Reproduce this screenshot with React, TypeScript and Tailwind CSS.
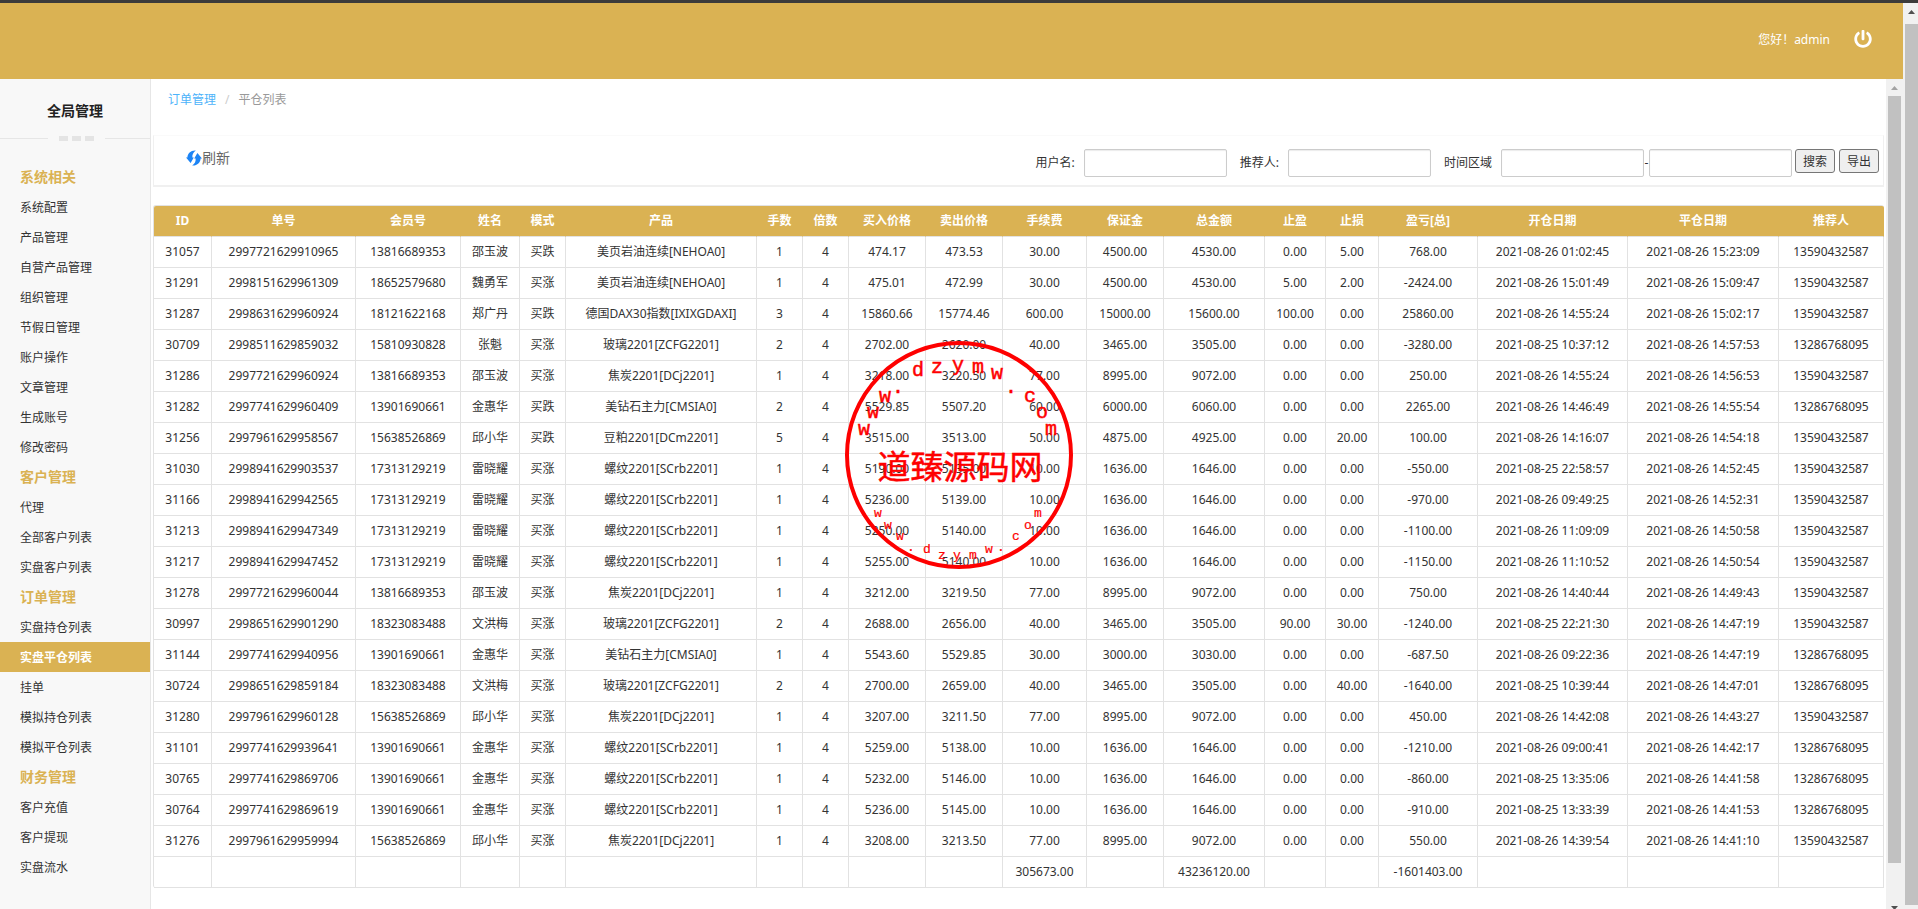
import React, { useState } from 'react';
import { FaPowerOff } from 'react-icons/fa';

const menu = [
  { title: '系统相关', items: ['系统配置', '产品管理', '自营产品管理', '组织管理', '节假日管理', '账户操作', '文章管理', '生成账号', '修改密码'] },
  { title: '客户管理', items: ['代理', '全部客户列表', '实盘客户列表'] },
  { title: '订单管理', items: ['实盘持仓列表', '实盘平仓列表', '挂单', '模拟持仓列表', '模拟平仓列表'] },
  { title: '财务管理', items: ['客户充值', '客户提现', '实盘流水'] },
];

const columns = [
  { label: 'ID', width: 'w-[58px]' },
  { label: '单号', width: 'w-[144px]' },
  { label: '会员号', width: 'w-[105px]' },
  { label: '姓名', width: 'w-[59px]' },
  { label: '模式', width: 'w-[46px]' },
  { label: '产品', width: 'w-[191px]' },
  { label: '手数', width: 'w-[46px]' },
  { label: '倍数', width: 'w-[46px]' },
  { label: '买入价格', width: 'w-[77px]' },
  { label: '卖出价格', width: 'w-[77px]' },
  { label: '手续费', width: 'w-[84px]' },
  { label: '保证金', width: 'w-[77px]' },
  { label: '总金额', width: 'w-[101px]' },
  { label: '止盈', width: 'w-[61px]' },
  { label: '止损', width: 'w-[53px]' },
  { label: '盈亏[总]', width: 'w-[99px]' },
  { label: '开仓日期', width: 'w-[150px]' },
  { label: '平仓日期', width: 'w-[151px]' },
  { label: '推荐人', width: 'w-[105px]' },
];

const rows = [
  ['31057', '2997721629910965', '13816689353', '邵玉波', '买跌', '美页岩油连续[NEHOA0]', '1', '4', '474.17', '473.53', '30.00', '4500.00', '4530.00', '0.00', '5.00', '768.00', '2021-08-26 01:02:45', '2021-08-26 15:23:09', '13590432587'],
  ['31291', '2998151629961309', '18652579680', '魏勇军', '买涨', '美页岩油连续[NEHOA0]', '1', '4', '475.01', '472.99', '30.00', '4500.00', '4530.00', '5.00', '2.00', '-2424.00', '2021-08-26 15:01:49', '2021-08-26 15:09:47', '13590432587'],
  ['31287', '2998631629960924', '18121622168', '郑广丹', '买跌', '德国DAX30指数[IXIXGDAXI]', '3', '4', '15860.66', '15774.46', '600.00', '15000.00', '15600.00', '100.00', '0.00', '25860.00', '2021-08-26 14:55:24', '2021-08-26 15:02:17', '13590432587'],
  ['30709', '2998511629859032', '15810930828', '张魁', '买涨', '玻璃2201[ZCFG2201]', '2', '4', '2702.00', '2620.00', '40.00', '3465.00', '3505.00', '0.00', '0.00', '-3280.00', '2021-08-25 10:37:12', '2021-08-26 14:57:53', '13286768095'],
  ['31286', '2997721629960924', '13816689353', '邵玉波', '买涨', '焦炭2201[DCj2201]', '1', '4', '3218.00', '3220.50', '77.00', '8995.00', '9072.00', '0.00', '0.00', '250.00', '2021-08-26 14:55:24', '2021-08-26 14:56:53', '13590432587'],
  ['31282', '2997741629960409', '13901690661', '金惠华', '买跌', '美钻石主力[CMSIA0]', '2', '4', '5529.85', '5507.20', '60.00', '6000.00', '6060.00', '0.00', '0.00', '2265.00', '2021-08-26 14:46:49', '2021-08-26 14:55:54', '13286768095'],
  ['31256', '2997961629958567', '15638526869', '邱小华', '买跌', '豆粕2201[DCm2201]', '5', '4', '3515.00', '3513.00', '50.00', '4875.00', '4925.00', '0.00', '20.00', '100.00', '2021-08-26 14:16:07', '2021-08-26 14:54:18', '13590432587'],
  ['31030', '2998941629903537', '17313129219', '雷晓耀', '买涨', '螺纹2201[SCrb2201]', '1', '4', '5190.00', '5135.00', '10.00', '1636.00', '1646.00', '0.00', '0.00', '-550.00', '2021-08-25 22:58:57', '2021-08-26 14:52:45', '13590432587'],
  ['31166', '2998941629942565', '17313129219', '雷晓耀', '买涨', '螺纹2201[SCrb2201]', '1', '4', '5236.00', '5139.00', '10.00', '1636.00', '1646.00', '0.00', '0.00', '-970.00', '2021-08-26 09:49:25', '2021-08-26 14:52:31', '13590432587'],
  ['31213', '2998941629947349', '17313129219', '雷晓耀', '买涨', '螺纹2201[SCrb2201]', '1', '4', '5250.00', '5140.00', '10.00', '1636.00', '1646.00', '0.00', '0.00', '-1100.00', '2021-08-26 11:09:09', '2021-08-26 14:50:58', '13590432587'],
  ['31217', '2998941629947452', '17313129219', '雷晓耀', '买涨', '螺纹2201[SCrb2201]', '1', '4', '5255.00', '5140.00', '10.00', '1636.00', '1646.00', '0.00', '0.00', '-1150.00', '2021-08-26 11:10:52', '2021-08-26 14:50:54', '13590432587'],
  ['31278', '2997721629960044', '13816689353', '邵玉波', '买涨', '焦炭2201[DCj2201]', '1', '4', '3212.00', '3219.50', '77.00', '8995.00', '9072.00', '0.00', '0.00', '750.00', '2021-08-26 14:40:44', '2021-08-26 14:49:43', '13590432587'],
  ['30997', '2998651629901290', '18323083488', '文洪梅', '买涨', '玻璃2201[ZCFG2201]', '2', '4', '2688.00', '2656.00', '40.00', '3465.00', '3505.00', '90.00', '30.00', '-1240.00', '2021-08-25 22:21:30', '2021-08-26 14:47:19', '13590432587'],
  ['31144', '2997741629940956', '13901690661', '金惠华', '买涨', '美钻石主力[CMSIA0]', '1', '4', '5543.60', '5529.85', '30.00', '3000.00', '3030.00', '0.00', '0.00', '-687.50', '2021-08-26 09:22:36', '2021-08-26 14:47:19', '13286768095'],
  ['30724', '2998651629859184', '18323083488', '文洪梅', '买涨', '玻璃2201[ZCFG2201]', '2', '4', '2700.00', '2659.00', '40.00', '3465.00', '3505.00', '0.00', '40.00', '-1640.00', '2021-08-25 10:39:44', '2021-08-26 14:47:01', '13286768095'],
  ['31280', '2997961629960128', '15638526869', '邱小华', '买涨', '焦炭2201[DCj2201]', '1', '4', '3207.00', '3211.50', '77.00', '8995.00', '9072.00', '0.00', '0.00', '450.00', '2021-08-26 14:42:08', '2021-08-26 14:43:27', '13590432587'],
  ['31101', '2997741629939641', '13901690661', '金惠华', '买涨', '螺纹2201[SCrb2201]', '1', '4', '5259.00', '5138.00', '10.00', '1636.00', '1646.00', '0.00', '0.00', '-1210.00', '2021-08-26 09:00:41', '2021-08-26 14:42:17', '13286768095'],
  ['30765', '2997741629869706', '13901690661', '金惠华', '买涨', '螺纹2201[SCrb2201]', '1', '4', '5232.00', '5146.00', '10.00', '1636.00', '1646.00', '0.00', '0.00', '-860.00', '2021-08-25 13:35:06', '2021-08-26 14:41:58', '13286768095'],
  ['30764', '2997741629869619', '13901690661', '金惠华', '买涨', '螺纹2201[SCrb2201]', '1', '4', '5236.00', '5145.00', '10.00', '1636.00', '1646.00', '0.00', '0.00', '-910.00', '2021-08-25 13:33:39', '2021-08-26 14:41:53', '13286768095'],
  ['31276', '2997961629959994', '15638526869', '邱小华', '买涨', '焦炭2201[DCj2201]', '1', '4', '3208.00', '3213.50', '77.00', '8995.00', '9072.00', '0.00', '0.00', '550.00', '2021-08-26 14:39:54', '2021-08-26 14:41:10', '13590432587'],
  ['', '', '', '', '', '', '', '', '', '', '305673.00', '', '43236120.00', '', '', '-1601403.00', '', '', ''],
];

const inputClass =
  'h-7 w-[143px] rounded-[2px] border border-[#ccc] bg-white px-1 shadow-[inset_0_1px_1px_rgba(0,0,0,0.08)] outline-none';

// letters on the upper and lower arc of the stamp: [char, x, baseline]
const upperArc: [string, number, number][] = [
  ['w', 20, 95], ['w', 29, 78], ['w', 41, 62], ['.', 54, 53], ['d', 74, 36], ['z', 93, 33], ['y', 114, 31],
  ['m', 134, 33], ['w', 153, 39], ['.', 167, 53], ['c', 186, 62], ['o', 198, 78], ['m', 207, 95],
];
const lowerArc: [string, number, number][] = [
  ['w', 34, 177], ['w', 44, 189], ['w', 56, 200], ['.', 67, 211], ['d', 83, 213], ['z', 98, 219], ['y', 113, 219],
  ['m', 129, 219], ['w', 145, 213], ['.', 157, 211], ['c', 172, 200], ['o', 184, 189], ['m', 194, 177],
];

const Stamp: React.FC = () => (
  <svg
    viewBox="0 0 230 230"
    className="pointer-events-none absolute top-1/2 left-1/2 z-20 h-[230px] w-[230px] -translate-x-1/2 -translate-y-1/2"
    fill="#fe0000"
    textAnchor="middle"
  >
    <circle cx="115" cy="115" r="112" fill="none" stroke="#fe0000" strokeWidth="4" />
    <g className="font-['Liberation_Mono',monospace] text-[20px]" stroke="#fe0000" strokeWidth="0.5">
      {upperArc.map(([char, x, y]) => (
        <text key={x} x={x} y={y}>{char}</text>
      ))}
    </g>
    <text x="116" y="139" className="font-['Noto_Sans_CJK_SC',sans-serif] text-[33px]" stroke="#fe0000" strokeWidth="0.5">
      道臻源码网
    </text>
    <g className="font-['Liberation_Mono',monospace] text-[13px]" stroke="#fe0000" strokeWidth="0.2">
      {lowerArc.map(([char, x, y]) => (
        <text key={x} x={x} y={y}>{char}</text>
      ))}
    </g>
  </svg>
);

const RefreshIcon: React.FC = () => (
  <svg viewBox="0 0 16 16" className="h-4 w-4" fill="#1c84f5">
    <path d="M9.8 0.6C5 0.2 1.6 3.4 1.4 7.6H0L4.6 13L7.8 7.6H6.4C6 4.8 7.2 2.4 9.8 0.6Z" />
    <path d="M6.2 15.4C11 15.8 14.4 12.6 14.6 8.4H16L11.4 3L8.2 8.4H9.6C10 11.2 8.8 13.6 6.2 15.4Z" />
  </svg>
);

const Sidebar: React.FC = () => {
  const [active, setActive] = useState('实盘平仓列表');

  return (
    <aside className="w-[151px] shrink-0 border-r border-[#e6e6e6] bg-[#f8f8f8]">
      <h2 className="pt-5 text-center text-sm leading-6 font-bold text-[#222]">全局管理</h2>
      <div className="mt-3 flex h-[6px] items-center justify-between">
        <span className="h-px w-12 bg-[#e6e6e6]" />
        <div className="flex gap-1">
          <span className="h-[5px] w-[9px] bg-[#e4e4e4]" />
          <span className="h-[5px] w-[9px] bg-[#e4e4e4]" />
          <span className="h-[5px] w-[9px] bg-[#e4e4e4]" />
        </div>
        <span className="h-px w-[45px] bg-[#e6e6e6]" />
      </div>
      <nav className="mt-[21px]">
        {menu.map((group) => (
          <div key={group.title}>
            <h3 className="h-[30px] pl-5 text-sm leading-[30px] font-bold text-[#dab253]">{group.title}</h3>
            {group.items.map((item) => (
              <a
                key={item}
                href="#"
                onClick={() => setActive(item)}
                className={
                  item === active
                    ? 'block h-[30px] bg-[#dab253] pl-5 leading-8 font-bold text-white'
                    : 'block h-[30px] pl-5 leading-8 hover:text-[#dab253]'
                }
              >
                {item}
              </a>
            ))}
          </div>
        ))}
      </nav>
    </aside>
  );
};

const SearchBar: React.FC = () => (
  <div className="mt-[25px] flex h-[52px] items-start justify-between border border-b-2 border-[#f0f0f0] border-t-[#fafafa]">
    <button type="button" className="mt-[10px] ml-8 flex items-center text-sm leading-6 text-[#666]">
      <RefreshIcon />
      刷新
    </button>
    <form className="mt-[13px] mr-1 flex items-start leading-7" onSubmit={(e) => e.preventDefault()}>
      <label htmlFor="username" className="mr-[9px]">用户名:</label>
      <input id="username" type="text" className={inputClass} />
      <label htmlFor="referrer" className="mr-[9px] ml-[13px]">推荐人:</label>
      <input id="referrer" type="text" className={inputClass} />
      <label htmlFor="start" className="mr-[9px] ml-[13px]">时间区域</label>
      <input id="start" type="text" className={inputClass} />
      <label htmlFor="end" className="w-[5px] text-center">-</label>
      <input id="end" type="text" className={inputClass} />
      <button type="submit" className="ml-[3px] h-6 w-10 rounded-[3px] border border-[#767676] bg-[#efefef] leading-6">
        搜索
      </button>
      <button type="button" className="ml-1 h-6 w-10 rounded-[3px] border border-[#767676] bg-[#efefef] leading-6">
        导出
      </button>
    </form>
  </div>
);

const OrderTable: React.FC = () => (
  <table className="mt-[18px] w-full table-fixed border-separate border-spacing-0 rounded-[3px] border-t border-l border-[#e2e2e2] text-center whitespace-nowrap">
    <colgroup>
      {columns.map((col) => (
        <col key={col.label} className={col.width} />
      ))}
    </colgroup>
    <thead>
      <tr className="h-[31px]">
        {columns.map((col) => (
          <th key={col.label} scope="col" className="border-r border-b border-r-[#dab253] border-b-[#e2e2e2] bg-[#dab253] p-0 font-bold text-white first:rounded-tl-[2px] last:rounded-tr-[2px]">
            {col.label}
          </th>
        ))}
      </tr>
    </thead>
    <tbody>
      {rows.map((row, i) => (
        <tr key={i} className="h-[31px] hover:bg-[#f8f8f8]">
          {row.map((cell, j) => (
            <td key={j} className="border-r border-b border-[#e2e2e2] p-0">
              {cell}
            </td>
          ))}
        </tr>
      ))}
    </tbody>
  </table>
);

const App: React.FC = () => {
  return (
    <div className="relative flex h-screen flex-col overflow-hidden bg-white font-['Noto_Sans','Noto_Sans_CJK_SC',sans-serif] text-xs text-[#333]">
      <div className="h-[3px] shrink-0 bg-[#3b3b3b]" />

      <div className="flex min-h-0 flex-1">
        <div className="flex min-w-0 flex-1 flex-col">
          <header className="flex h-[76px] shrink-0 items-start justify-end bg-[#dab253] pt-6 pr-[31px] text-white">
            <span className="leading-[26px]">您好！admin</span>
            <button type="button" aria-label="退出" className="ml-6 flex h-6 items-center">
              <FaPowerOff className="h-[18px] w-[18px]" />
            </button>
          </header>

          <div className="flex min-h-0 flex-1">
            <Sidebar />
            <main className="min-w-0 flex-1 overflow-hidden px-[2px]">
              <div className="mt-[11px] flex h-5 items-center gap-[9px] pl-[15px] leading-5">
                <a href="#" className="text-[#4db3fa]">订单管理</a>
                <span className="text-[#ccc]">/</span>
                <span className="text-[#999]">平仓列表</span>
              </div>
              <SearchBar />
              <OrderTable />
            </main>

            {/* Inner scrollbar */}
            <div className="flex w-[17px] shrink-0 flex-col items-center bg-[#f1f1f1]">
              <svg viewBox="0 0 17 17" className="h-[17px] w-[17px] shrink-0" fill="#a3a3a3">
                <path d="M5 11L8.5 7L12 11Z" />
              </svg>
              <div className="w-[13px] flex-1 bg-[#c1c1c1]" />
              <svg viewBox="0 0 17 46" className="h-[46px] w-[17px] shrink-0" fill="#505050">
                <path d="M5 43H12L8.5 47Z" />
              </svg>
            </div>
          </div>
        </div>

        {/* Page scrollbar */}
        <div className="flex w-[15px] shrink-0 flex-col items-end bg-[#f1f1f1] pb-1">
          <svg viewBox="0 0 15 21" className="h-[21px] w-[15px] shrink-0" fill="#505050">
            <path d="M5 11L8.5 7L12 11Z" />
          </svg>
          <div className="w-[13px] flex-1 bg-[#c1c1c1]" />
        </div>
      </div>

      <Stamp />
    </div>
  );
};

export default App;
